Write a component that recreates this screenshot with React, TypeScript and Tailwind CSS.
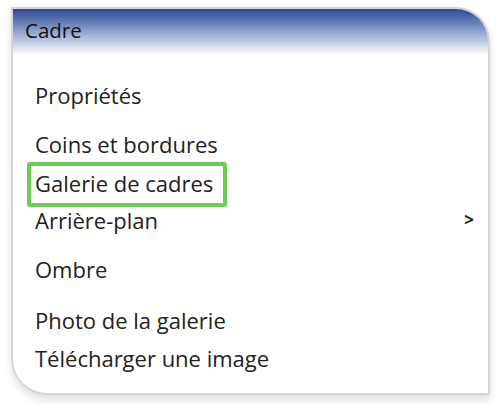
import React from 'react';

type Item = { label: string; submenu?: boolean; selected?: boolean };

const groups: Item[][] = [
  [{ label: 'Propriétés' }],
  [
    { label: 'Coins et bordures' },
    { label: 'Galerie de cadres', selected: true },
    { label: 'Arrière-plan', submenu: true },
  ],
  [{ label: 'Ombre' }],
  [{ label: 'Photo de la galerie' }, { label: 'Télécharger une image' }],
];

const Row = ({ item }: { item: Item }) => (
  <div className="flex h-[38px] items-center justify-between pl-[22px] pr-[14px] text-[22px] text-[#222]">
    {item.selected ? (
      <span className="-ml-[8px] mt-[5px] flex h-[45px] w-[200px] items-center rounded-[3px] border-[4px] border-[#6bcc55] pb-[2px] pl-[4px]">
        {item.label}
      </span>
    ) : (
      <span>{item.label}</span>
    )}
    {item.submenu && <span className="text-[17px] font-bold text-[#222]">&gt;</span>}
  </div>
);

const App = () => {
  return (
    <div className="h-[406px] w-[500px] bg-white pl-[11px] pt-[7px]" style={{ fontFamily: '"Open Sans", sans-serif' }}>
      <div className="h-[388px] w-[479px] overflow-hidden rounded-tr-[34px] rounded-bl-[36px] border-[2px] border-[#d9d5d7] bg-white shadow-[0_5px_8px_rgba(0,0,0,0.12)]">
        {/* En-tête */}
        <div className="flex h-[46px] items-center bg-linear-to-b from-[#2e4a94] via-[#9eadd2] via-55% to-white pl-[12px] pb-[3px] text-[20.5px] text-[#111]">
          Cadre
        </div>

        <div className="flex flex-col pt-[21px]">
          {groups.map((group, i) => (
            <div key={i} className={i > 0 ? (i === 3 ? 'mt-[13px]' : 'mt-[11px]') : ''}>
              {group.map((item) => (
                <Row key={item.label} item={item} />
              ))}
            </div>
          ))}
        </div>
      </div>
    </div>
  );
};

export default App;
